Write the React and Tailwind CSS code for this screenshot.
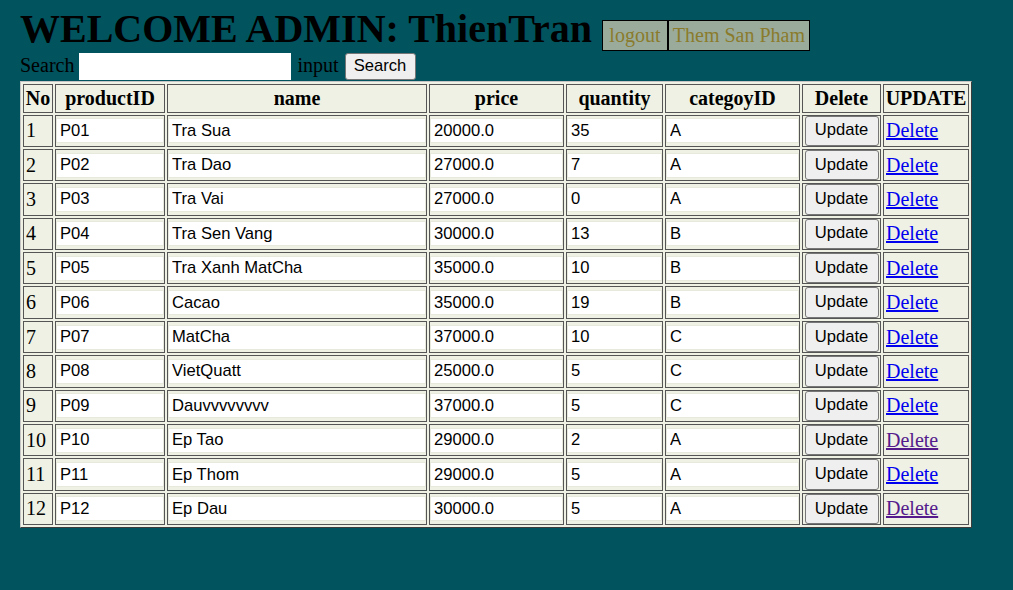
import React from "react";

const rows = [
  ["1", "P01", "Tra Sua", "20000.0", "35", "A", false],
  ["2", "P02", "Tra Dao", "27000.0", "7", "A", false],
  ["3", "P03", "Tra Vai", "27000.0", "0", "A", false],
  ["4", "P04", "Tra Sen Vang", "30000.0", "13", "B", false],
  ["5", "P05", "Tra Xanh MatCha", "35000.0", "10", "B", false],
  ["6", "P06", "Cacao", "35000.0", "19", "B", false],
  ["7", "P07", "MatCha", "37000.0", "10", "C", false],
  ["8", "P08", "VietQuatt", "25000.0", "5", "C", false],
  ["9", "P09", "Dau" + "vvvvvvvv", "37000.0", "5", "C", false],
  ["10", "P10", "Ep Tao", "29000.0", "2", "A", true],
  ["11", "P11", "Ep Thom", "29000.0", "5", "A", false],
  ["12", "P12", "Ep Dau", "30000.0", "5", "A", true],
];

function Cell({ value }) {
  return (
    <td className="border border-[#555555] p-0 align-middle">
      <input
        type="text"
        defaultValue={value}
        className="block w-full h-[25px] border border-[#e6e9db] bg-white pl-[3px] pr-[2px] font-['Liberation_Sans',Arial,sans-serif] text-[16.6px] text-black outline-none"
      />
    </td>
  );
}

export default function App() {
  return (
    <div className="min-h-screen w-full bg-[#01535e] px-[20px] pt-[6px] font-['Liberation_Serif','Times_New_Roman',serif] text-[20px] text-black">
      <div className="flex items-baseline h-[46.5px]">
        <h1 className="m-0 text-[40px] font-bold leading-[46px]">WELCOME ADMIN: ThienTran</h1>
        <div className="ml-[10px] flex">
          <span className="w-[66px] text-center border border-black bg-[#9bab9b] text-[#8a7b2c] leading-[23px] py-[3px]">logout</span>
          <span className="w-[142px] text-center border border-black bg-[#9bab9b] text-[#8a7b2c] leading-[23px] py-[3px]">Them San Pham</span>
        </div>
      </div>
      <div className="flex items-center h-[28px]">
        <span className="leading-[23px] pb-[3px]">Search</span>
        <input type="text" className="ml-[5px] w-[212px] h-[27px] bg-white border-0 outline-none px-[2px] font-['Liberation_Sans',Arial,sans-serif] text-[16px]" />
        <span className="ml-[6px] leading-[23px] pb-[3px]">input</span>
        <button className="ml-[6px] w-[71px] h-[27px] bg-[#efefef] border border-[#767676] rounded-[3px] font-['Liberation_Sans',Arial,sans-serif] text-[16.6px] text-black">Search</button>
      </div>
      <table className="table-fixed w-[952px] border-separate border-spacing-[2px] bg-[#eef1e4] border border-t-[#c4c4c4] border-l-[#c4c4c4] border-r-[#3c3c3c] border-b-[#3c3c3c]">
        <thead>
          <tr>
            <th className="w-[30px] border border-[#555555] px-0 py-[2px] leading-[23px] font-bold text-center">No</th>
            <th className="w-[110px] border border-[#555555] px-0 py-[2px] leading-[23px] font-bold text-center">productID</th>
            <th className="w-[260px] border border-[#555555] px-0 py-[2px] leading-[23px] font-bold text-center">name</th>
            <th className="w-[135px] border border-[#555555] px-0 py-[2px] leading-[23px] font-bold text-center">price</th>
            <th className="w-[97px] border border-[#555555] px-0 py-[2px] leading-[23px] font-bold text-center">quantity</th>
            <th className="w-[135px] border border-[#555555] px-0 py-[2px] leading-[23px] font-bold text-center">categoyID</th>
            <th className="w-[79px] border border-[#555555] px-0 py-[2px] leading-[23px] font-bold text-center">Delete</th>
            <th className="w-[86px] border border-[#555555] px-0 py-[2px] leading-[23px] font-bold text-center">UPDATE</th>
          </tr>
        </thead>
        <tbody>
          {rows.map((r) => (
            <tr key={r[0]}>
              <td className="border border-[#555555] pl-[2px] align-middle leading-[23px]">{r[0]}</td>
              <Cell value={r[1]} />
              <Cell value={r[2]} />
              <Cell value={r[3]} />
              <Cell value={r[4]} />
              <Cell value={r[5]} />
              <td className="border border-[#555555] p-0 align-middle">
                <button className="mx-auto block w-[74px] h-[30.4px] bg-[#efefef] border border-[#767676] rounded-[3px] font-['Liberation_Sans',Arial,sans-serif] text-[16.6px] text-black">Update</button>
              </td>
              <td className="border border-[#555555] pl-[2px] align-middle leading-[23px]">
                <a href="#" className={r[6] ? "underline text-[#551a8b]" : "underline text-[#0000ee]"}>Delete</a>
              </td>
            </tr>
          ))}
        </tbody>
      </table>
    </div>
  );
}
